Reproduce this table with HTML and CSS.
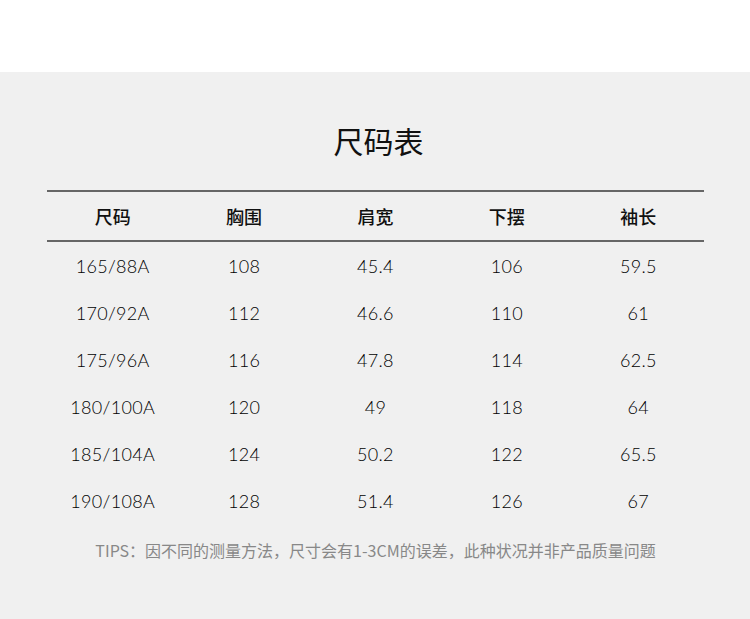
FILE: index.html
```html
<!DOCTYPE html>
<html lang="zh">
<head>
<meta charset="utf-8">
<link rel="stylesheet" href="styles.css">
</head>
<body>
<div class="top"></div>
<section class="panel">
  <h1 class="title">尺码表</h1>
  <table class="size-table">
    <thead>
      <tr><th>尺码</th><th>胸围</th><th>肩宽</th><th>下摆</th><th>袖长</th></tr>
    </thead>
    <tbody>
      <tr><td>165/88A</td><td>108</td><td>45.4</td><td>106</td><td>59.5</td></tr>
      <tr><td>170/92A</td><td>112</td><td>46.6</td><td>110</td><td>61</td></tr>
      <tr><td>175/96A</td><td>116</td><td>47.8</td><td>114</td><td>62.5</td></tr>
      <tr><td>180/100A</td><td>120</td><td>49</td><td>118</td><td>64</td></tr>
      <tr><td>185/104A</td><td>124</td><td>50.2</td><td>122</td><td>65.5</td></tr>
      <tr><td>190/108A</td><td>128</td><td>51.4</td><td>126</td><td>67</td></tr>
    </tbody>
  </table>
  <p class="tips">TIPS：因不同的测量方法，尺寸会有1-3CM的误差，此种状况并非产品质量问题</p>
</section>
</body>
</html>
```

FILE: styles.css
```css
html, body {
  margin: 0;
  padding: 0;
  background: #f0f0f0;
}
.top {
  height: 72px;
  background: #ffffff;
}
.panel {
  background: #f0f0f0;
  padding: 48px 46px 40px 47px;
  font-family: "Noto Sans CJK SC", sans-serif;
  color: #111;
}
.title {
  margin: 0 0 30px;
  padding-left: 6px;
  font-size: 30px;
  line-height: 40px;
  font-weight: 400;
  text-align: center;
}
.size-table {
  width: 657px;
  border-collapse: collapse;
  table-layout: fixed;
}
.size-table thead tr {
  border-top: 2px solid #666;
  border-bottom: 2px solid #666;
}
.size-table th {
  height: 48px;
  padding: 0;
  font-size: 18px;
  font-weight: 500;
  text-align: center;
  vertical-align: middle;
}
.size-table td {
  height: 47px;
  padding: 0;
  font-family: "Lato", "Noto Sans CJK SC", sans-serif;
  font-size: 18px;
  font-weight: 300;
  letter-spacing: 0.3px;
  text-align: center;
  vertical-align: middle;
  color: #000;
}
.tips {
  margin: 16px 0 0;
  font-size: 16px;
  line-height: 20px;
  color: #888;
  text-align: center;
}
```
